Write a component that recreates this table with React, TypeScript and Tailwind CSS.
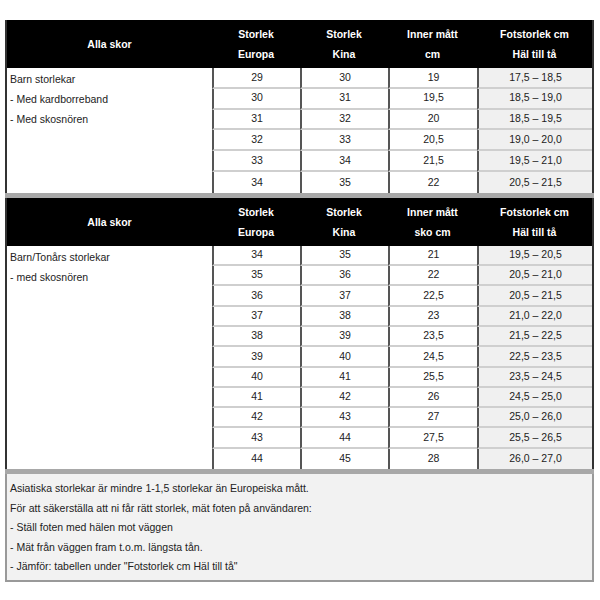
const cols = "grid grid-cols-[205px_88px_88px_89px_1fr]";

type Row = [string, string, string, string];

const small: Row[] = [
  ["29", "30", "19", "17,5 – 18,5"],
  ["30", "31", "19,5", "18,5 – 19,0"],
  ["31", "32", "20", "18,5 – 19,5"],
  ["32", "33", "20,5", "19,0 – 20,0"],
  ["33", "34", "21,5", "19,5 – 21,0"],
  ["34", "35", "22", "20,5 – 21,5"],
];

const large: Row[] = [
  ["34", "35", "21", "19,5 – 20,5"],
  ["35", "36", "22", "20,5 – 21,0"],
  ["36", "37", "22,5", "20,5 – 21,5"],
  ["37", "38", "23", "21,0 – 22,0"],
  ["38", "39", "23,5", "21,5 – 22,5"],
  ["39", "40", "24,5", "22,5 – 23,5"],
  ["40", "41", "25,5", "23,5 – 24,5"],
  ["41", "42", "26", "24,5 – 25,0"],
  ["42", "43", "27", "25,0 – 26,0"],
  ["43", "44", "27,5", "25,5 – 26,5"],
  ["44", "45", "28", "26,0 – 27,0"],
];

function Header({ inner }: { inner: [string, string] }) {
  return (
    <div className={`${cols} h-[48px] bg-black text-white font-bold text-[10.5px] leading-[20px] text-center`}>
      <div className="flex items-center justify-center">Alla skor</div>
      <div className="flex flex-col justify-center">
        <span>Storlek</span>
        <span>Europa</span>
      </div>
      <div className="flex flex-col justify-center">
        <span>Storlek</span>
        <span>Kina</span>
      </div>
      <div className="flex flex-col justify-center">
        <span>{inner[0]}</span>
        <span>{inner[1]}</span>
      </div>
      <div className="flex flex-col justify-center">
        <span>Fotstorlek cm</span>
        <span>Häl till tå</span>
      </div>
    </div>
  );
}

function Body({ rows, labels, rowH }: { rows: Row[]; labels: string[]; rowH: string }) {
  return (
    <div className={`${cols} text-[10.5px] text-[#222]`}>
      <div className="flex flex-col pl-[3px] pt-[1px] leading-[20px]" style={{ gridRow: `span ${rows.length}` }}>
        {labels.map((l) => (
          <span key={l}>{l}</span>
        ))}
      </div>
      {rows.map((r, i) =>
        r.map((v, j) => (
          <div
            key={`${i}-${j}`}
            className={`${rowH} flex items-center justify-center border-l-2 border-[#555] ${
              i < rows.length - 1 ? "border-b-2 border-b-[#cfcfcf]" : ""
            } ${j === 3 ? "bg-[#f0f0f0]" : "bg-white"}`}
          >
            {v}
          </div>
        ))
      )}
    </div>
  );
}

export default function App() {
  return (
    <div className="w-[600px] h-[600px] bg-white pt-[20px] px-[5px] font-['Liberation_Sans',Arial,sans-serif]">
      <div className="w-[589px]">
        <div className="border-x-2 border-[#333]">
          <Header inner={["Inner mått", "cm"]} />
          <Body rows={small} rowH="h-[20.8px]" labels={["Barn storlekar", "- Med kardborreband", "- Med skosnören"]} />
        </div>
        <div className="h-[5px] bg-[#a8a8a8]" />
        <div className="border-x-2 border-[#333]">
          <Header inner={["Inner mått", "sko cm"]} />
          <Body rows={large} rowH="h-[20.3px]" labels={["Barn/Tonårs storlekar", "- med skosnören"]} />
        </div>
        <div className="h-[5px] bg-[#a8a8a8]" />
        <div className="border-2 border-t-0 border-[#999] bg-[#f2f2f2] px-[3px] pt-[5px] pb-[3px] text-[10.5px] leading-[19.5px] text-[#222]">
          <p>Asiatiska storlekar är mindre 1-1,5 storlekar än Europeiska mått.</p>
          <p>För att säkerställa att ni får rätt storlek, mät foten på användaren:</p>
          <p>- Ställ foten med hälen mot väggen</p>
          <p>- Mät från väggen fram t.o.m. längsta tån.</p>
          <p>- Jämför: tabellen under "Fotstorlek cm Häl till tå"</p>
        </div>
      </div>
    </div>
  );
}
